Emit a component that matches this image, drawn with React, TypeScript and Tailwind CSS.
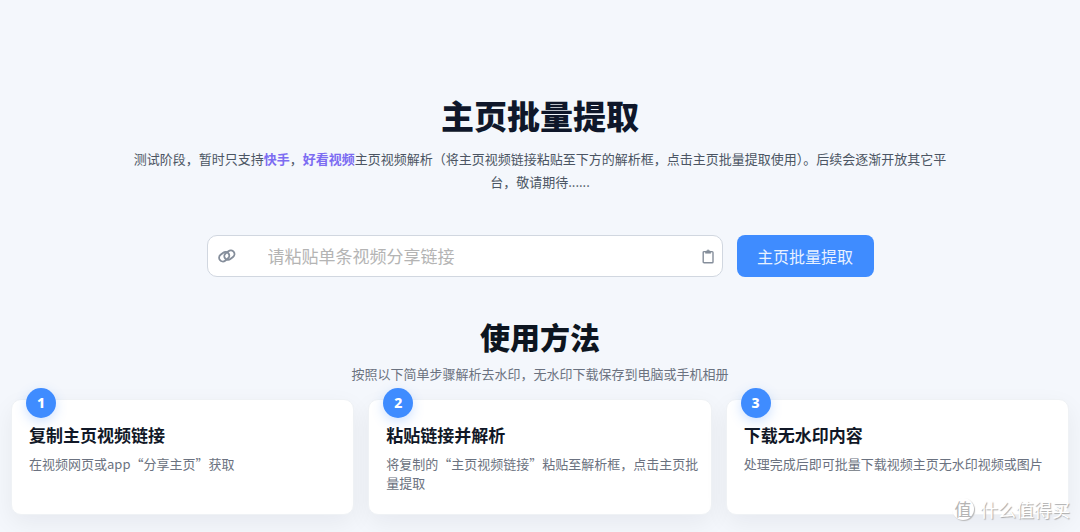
type Step = {
  title: string;
  text: string;
};

const STEPS: Step[] = [
  { title: '复制主页视频链接', text: '在视频网页或app“分享主页”获取' },
  { title: '粘贴链接并解析', text: '将复制的“主页视频链接”粘贴至解析框，点击主页批量提取' },
  { title: '下载无水印内容', text: '处理完成后即可批量下载视频主页无水印视频或图片' },
];

function ChainIcon() {
  return (
    <svg
      viewBox="0 0 18 14"
      className="h-3.5 w-[18px] shrink-0"
      fill="none"
      stroke="#858e9b"
      strokeWidth="1.9"
      aria-hidden="true"
    >
      <rect x="0.8" y="4" width="10.8" height="7.4" rx="3.7" transform="rotate(-38 6.2 7.7)" />
      <rect x="6" y="2.4" width="10.8" height="7.4" rx="3.7" transform="rotate(-38 11.4 6.1)" />
    </svg>
  );
}

function ClipboardIcon() {
  return (
    <svg viewBox="0 0 12 15" className="h-[15px] w-3" fill="none" stroke="#858e9b" aria-hidden="true">
      <rect x="1.2" y="2.6" width="9.8" height="11.2" rx="0.9" strokeWidth="1.4" />
      <path d="M3.4 4.2V2.4h1.2a1.5 1.5 0 0 1 3 0h1.2v1.8z" fill="#858e9b" strokeWidth="0.6" />
    </svg>
  );
}

function StepCard({ index, step }: { index: number; step: Step }) {
  return (
    <li className="relative min-h-[116px] rounded-[10px] border border-[#eff2f5] bg-white pt-[23px] pr-2 pb-4 pl-[17px] shadow-[0_8px_24px_rgba(15,23,42,0.06)]">
      <span className="absolute -top-3 left-3.5 flex size-[30px] items-center justify-center rounded-full bg-[#3f8cff] font-['Noto_Sans',sans-serif] text-sm font-extrabold text-white shadow-[0_4px_12px_rgba(63,140,255,0.25)]">
        {index + 1}
      </span>
      <h3 className="text-[17px] leading-6 font-bold text-[#111827]">{step.title}</h3>
      <p className="mt-[7px] text-[13px] leading-[19px] text-[#6b7280]">{step.text}</p>
    </li>
  );
}

export default function App() {
  return (
    <div className="relative min-h-screen bg-[#f4f7fc] pb-4 font-['Noto_Sans_CJK_SC','Noto_Sans',sans-serif]">
      <header className="mx-auto max-w-[834px] pt-[95px] text-center">
        <h1 className="text-[33px] leading-10 font-black text-[#0f172a]">主页批量提取</h1>
        <p className="mt-3 text-[13px] leading-[23px] text-[#4b5563]">
          测试阶段，暂时只支持<strong className="font-bold text-[#7c6cf2]">快手</strong>，
          <strong className="font-bold text-[#7c6cf2]">好看视频</strong>
          主页视频解析（将主页视频链接粘贴至下方的解析框，点击主页批量提取使用）。后续会逐渐开放其它平台，敬请期待......
        </p>
      </header>

      <form
        className="mx-auto mt-[42px] flex max-w-[667px] gap-3.5"
        onSubmit={(e) => e.preventDefault()}
      >
        <div className="flex h-[42px] min-w-0 flex-1 items-center rounded-[10px] border border-[#d1d7e0] bg-white pr-2 pl-2.5">
          <ChainIcon />
          <input
            type="text"
            aria-label="视频分享链接"
            placeholder="请粘贴单条视频分享链接"
            className="ml-8 min-w-0 flex-1 bg-transparent text-[17px] text-[#374151] outline-none placeholder:text-[#b4b4b4]"
          />
          <button type="button" aria-label="粘贴">
            <ClipboardIcon />
          </button>
        </div>
        <button
          type="submit"
          className="h-[42px] w-[137px] shrink-0 rounded-lg bg-[#3f8cff] text-base text-[#e8f1ff]"
        >
          主页批量提取
        </button>
      </form>

      <section className="px-[11px] pt-[38px] text-center">
        <h2 className="text-[30px] leading-[42px] font-black text-[#0d1520]">使用方法</h2>
        <p className="mt-[5px] text-[13px] leading-[23px] text-[#6b7280]">
          按照以下简单步骤解析去水印，无水印下载保存到电脑或手机相册
        </p>
        <ol className="mt-3.5 grid grid-cols-3 gap-3.5 text-left">
          {STEPS.map((step, i) => (
            <StepCard key={step.title} index={i} step={step} />
          ))}
        </ol>
      </section>

      {/* site mark over the bottom corner */}
      <div className="pointer-events-none absolute right-2.5 bottom-[11px] flex items-center gap-1.5 text-[18px] leading-6 text-white [text-shadow:1px_1px_1px_#a8a8a8]">
        <span className="flex size-[22px] items-center justify-center rounded-full bg-white text-[17px] text-[#b5b5b5] shadow-[1px_1px_1px_#b8b8b8] [text-shadow:none]">
          值
        </span>
        什么值得买
      </div>
    </div>
  );
}
